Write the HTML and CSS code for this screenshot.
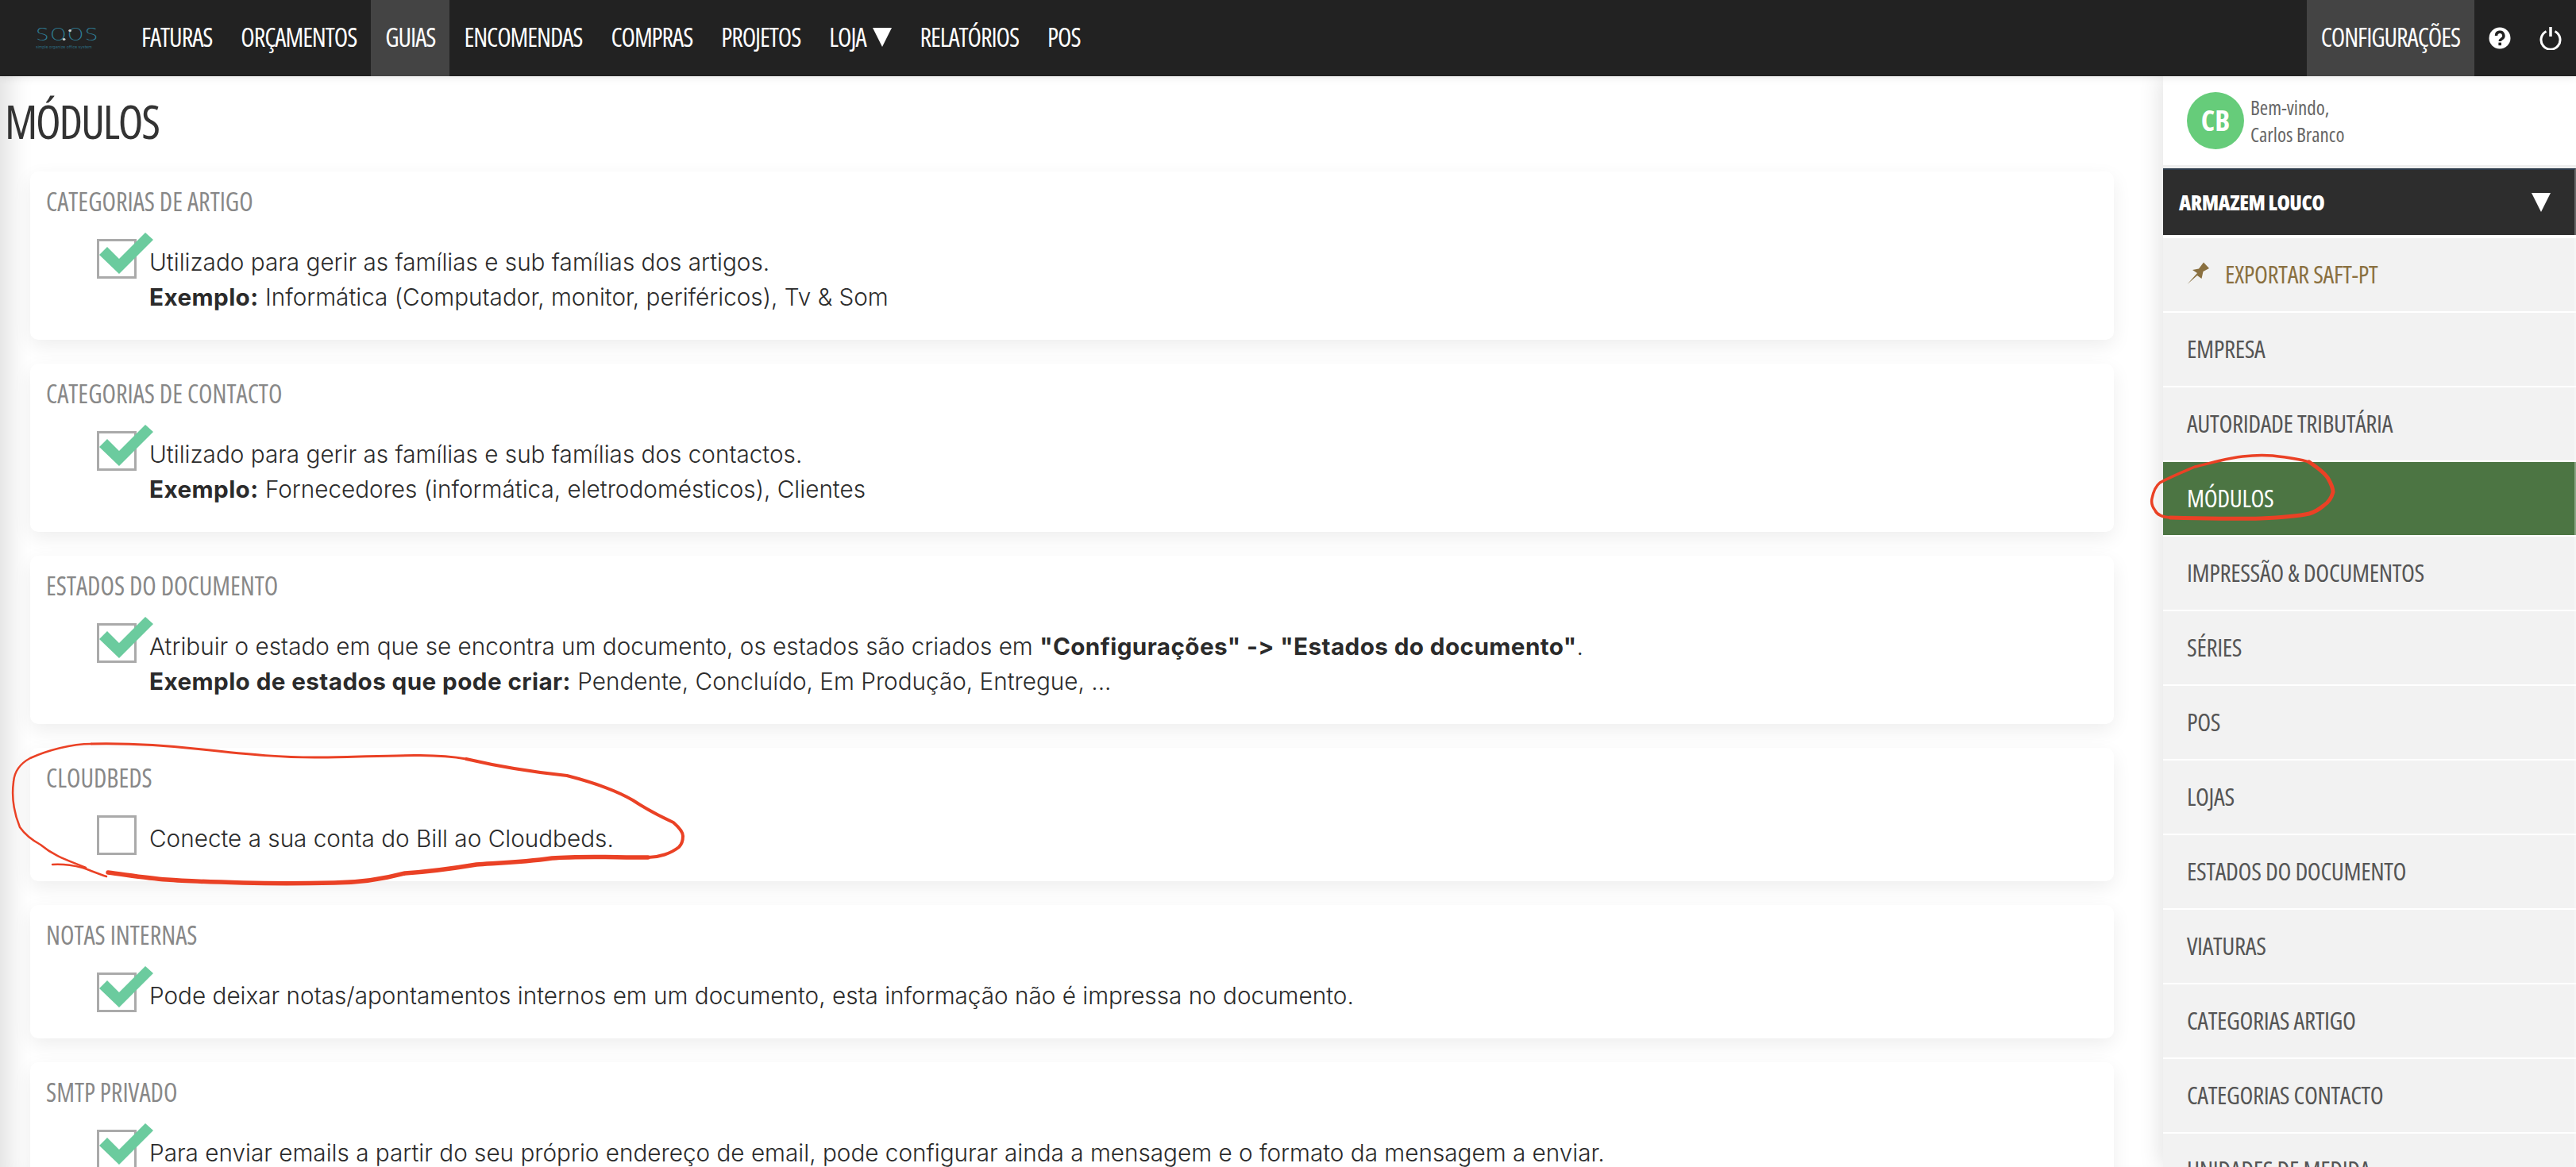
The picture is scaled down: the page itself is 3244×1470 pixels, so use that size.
FILE: index.html
```html
<!DOCTYPE html>
<html lang="pt">
  <head>
    <meta charset="UTF-8" />
    <title>Módulos</title>
    <link rel="stylesheet" href="styles.css">
  </head>
  <body>
    <nav class="topbar">
      <div class="logo">
        <span class="logo-name">SOOS</span>
        <span class="logo-sub">simple organize office system</span>
      </div>
      <a class="nav-item">FATURAS</a>
      <a class="nav-item">ORÇAMENTOS</a>
      <a class="nav-item active">GUIAS</a>
      <a class="nav-item">ENCOMENDAS</a>
      <a class="nav-item">COMPRAS</a>
      <a class="nav-item">PROJETOS</a>
      <a class="nav-item">LOJA <i class="arrow"></i></a>
      <a class="nav-item">RELATÓRIOS</a>
      <a class="nav-item">POS</a>
      <a class="nav-item active push">CONFIGURAÇÕES</a>
      <a class="nav-icon">
        <svg width="28" height="28" viewBox="0 0 28 28">
          <circle cx="14" cy="14" r="13.5" fill="#fff" />
          <path d="M9.500 11 a4.700 4.700 0 1 1 7 4 c-1.600 1 -2.200 1.600 -2.200 3" fill="none" stroke="#222" stroke-width="3.400" />
          <rect x="12.400" y="19.600" width="3.600" height="3.600" fill="#222" />
        </svg>
      </a>
      <a class="nav-icon">
        <svg width="28" height="30" viewBox="0 0 28 30">
          <path d="M8.500 6.500 a12 12 0 1 0 11 0" fill="none" stroke="#fff" stroke-width="3" />
          <path d="M14 1 v12" stroke="#fff" stroke-width="3.500" />
        </svg>
      </a>
    </nav>

    <div class="page">
      <main class="content">
        <h1>MÓDULOS</h1>

        <section class="card">
          <h2>CATEGORIAS DE ARTIGO</h2>
          <div class="module">
            <span class="check on"><svg width="74" height="62" viewBox="0 0 74 62"><use href="#tick" /></svg></span>
            <p>
              Utilizado para gerir as famílias e sub famílias dos artigos.<br />
              <b>Exemplo:</b> Informática (Computador, monitor, periféricos), Tv &amp; Som
            </p>
          </div>
        </section>

        <section class="card">
          <h2>CATEGORIAS DE CONTACTO</h2>
          <div class="module">
            <span class="check on"><svg width="74" height="62" viewBox="0 0 74 62"><use href="#tick" /></svg></span>
            <p>
              Utilizado para gerir as famílias e sub famílias dos contactos.<br />
              <b>Exemplo:</b> Fornecedores (informática, eletrodomésticos), Clientes
            </p>
          </div>
        </section>

        <section class="card">
          <h2>ESTADOS DO DOCUMENTO</h2>
          <div class="module">
            <span class="check on"><svg width="74" height="62" viewBox="0 0 74 62"><use href="#tick" /></svg></span>
            <p>
              Atribuir o estado em que se encontra um documento, os estados são criados em <b>"Configurações" -&gt; "Estados do documento"</b>.<br />
              <b>Exemplo de estados que pode criar:</b> Pendente, Concluído, Em Produção, Entregue, ...
            </p>
          </div>
        </section>

        <section class="card">
          <h2>CLOUDBEDS</h2>
          <div class="module">
            <span class="check"></span>
            <p>Conecte a sua conta do Bill ao Cloudbeds.</p>
          </div>
        </section>

        <section class="card">
          <h2>NOTAS INTERNAS</h2>
          <div class="module">
            <span class="check on"><svg width="74" height="62" viewBox="0 0 74 62"><use href="#tick" /></svg></span>
            <p>Pode deixar notas/apontamentos internos em um documento, esta informação não é impressa no documento.</p>
          </div>
        </section>

        <section class="card">
          <h2>SMTP PRIVADO</h2>
          <div class="module">
            <span class="check on"><svg width="74" height="62" viewBox="0 0 74 62"><use href="#tick" /></svg></span>
            <p>Para enviar emails a partir do seu próprio endereço de email, pode configurar ainda a mensagem e o formato da mensagem a enviar.</p>
          </div>
        </section>
      </main>

      <aside class="sidebar">
        <div class="profile">
          <div class="avatar">CB</div>
          <div class="welcome">Bem-vindo,<br />Carlos Branco</div>
        </div>
        <div class="store">
          <span>ARMAZEM LOUCO</span>
          <i class="store-arrow"></i>
        </div>
        <a class="side-item saft">
          <svg width="30" height="30" viewBox="9 12 30 30">
            <polygon points="9.500,40 22,26 16,22 24,20.500 30,12.500 37,20 29.500,24 27.500,33 22,29" fill="#8a7040" />
          </svg>
          EXPORTAR SAFT-PT
        </a>
        <a class="side-item">EMPRESA</a>
        <a class="side-item">AUTORIDADE TRIBUTÁRIA</a>
        <a class="side-item current">MÓDULOS</a>
        <a class="side-item">IMPRESSÃO &amp; DOCUMENTOS</a>
        <a class="side-item">SÉRIES</a>
        <a class="side-item">POS</a>
        <a class="side-item">LOJAS</a>
        <a class="side-item">ESTADOS DO DOCUMENTO</a>
        <a class="side-item">VIATURAS</a>
        <a class="side-item">CATEGORIAS ARTIGO</a>
        <a class="side-item">CATEGORIAS CONTACTO</a>
        <a class="side-item">UNIDADES DE MEDIDA</a>
      </aside>
    </div>

    <svg class="defs" width="0" height="0">
      <symbol id="tick" viewBox="0 0 74 62">
        <polygon points="61,0 71,9 28,52 3,28 13,18 28,33" fill="#6bcb9e" />
      </symbol>
    </svg>

    <!-- red pen marks on top of the screenshot -->
    <svg class="marks" width="3244" height="1470" viewBox="0 0 3244 1470" fill="none" stroke="#ea4125" stroke-linecap="round" stroke-linejoin="round">
      <path stroke-width="2.500" d="M66 1089 C80 1088 92 1090 104 1093 C115 1097 125 1101 134 1104" />
      <path stroke-width="2.500" d="M115 937 C90 937 60 945 38 955 C25 962 18 972 17 985 C15 1000 16 1020 25 1042 C32 1052 40 1058 51 1064 C70 1080 90 1085 108 1093" />
      <path stroke-width="3" d="M115 937 C160 936 210 939 255 944 C310 950 360 955 408 954 C480 953 540 948 587 956" />
      <path stroke-width="4" d="M587 956 C630 966 675 973 714 977 C745 985 775 995 797 1008 C815 1020 835 1030 848 1036 C856 1043 860 1048 860 1053 C860 1060 858 1064 855 1067 C845 1075 830 1080 816 1080" />
      <path stroke-width="5.500" d="M816 1080 C770 1080 730 1078 695 1081 C660 1086 630 1087 600 1089 C570 1094 540 1098 510 1100 C480 1108 450 1112 421 1112 C380 1113 340 1113 306 1112 C270 1111 235 1110 210 1108 C185 1106 160 1102 136 1099" />
      <path stroke-width="3.500" d="M2733 652 C2722 651 2716 648 2714 643 C2710 638 2709 633 2710 628 C2712 618 2715 612 2720 608 C2735 600 2750 594 2764 588 C2785 583 2805 577 2824 575 C2840 573 2850 573 2862 574 C2880 576 2895 578 2908 582" />
      <path stroke-width="5" d="M2908 582 C2920 590 2928 596 2932 603 C2936 610 2938 615 2938 620 C2936 628 2932 633 2926 637 C2920 642 2915 645 2908 647 C2890 651 2870 652 2847 653 C2810 654 2770 653 2733 652" />
    </svg>
  </body>
</html>
```
FILE: styles.css
```css
html,
body {
  margin: 0;
  height: 100%;
  overflow: hidden;
}

body {
  position: relative;
  background: #fff;
  color: #333;
  font-family: "Inter", "Liberation Sans", sans-serif;
  font-variant-ligatures: none;
  font-feature-settings: "calt" 0;
}

h1,
h2,
.nav-item,
.side-item,
.welcome,
.avatar,
.store {
  font-family: "Open Sans", "Liberation Sans", sans-serif;
  font-stretch: 75%;
}

.topbar {
  display: flex;
  align-items: stretch;
  height: 96px;
  background: #222;
  position: relative;
  z-index: 3;
  box-shadow: 0 2px 10px rgba(0, 0, 0, 0.08);
}

.logo {
  width: 160px;
  display: flex;
  flex-direction: column;
  padding: 32px 0 0 45px;
  box-sizing: border-box;
  color: #2f7d96;
}

.logo-name {
  position: relative;
  width: 62px;
  font-family: "DejaVu Sans", sans-serif;
  font-weight: 200;
  font-size: 21px;
  line-height: 24px;
  letter-spacing: 1px;
  transform: scaleX(1.25);
  transform-origin: left;
}

.logo-name::before,
.logo-name::after {
  content: "";
  position: absolute;
  width: 3px;
  height: 3px;
  border-radius: 50%;
  background: #ccc;
}

.logo-name::before {
  left: 33px;
  top: 5px;
}

.logo-name::after {
  left: 27px;
  top: 16px;
}

.logo-sub {
  font-size: 5px;
  line-height: 7px;
  white-space: nowrap;
  opacity: 0.8;
}

.nav-item {
  display: flex;
  align-items: center;
  padding: 0 18px 3px;
  color: #fff;
  font-size: 32px;
  letter-spacing: -1.05px;
}

.nav-item.active {
  background: #444;
}

.nav-item.push {
  margin-left: auto;
}

.arrow {
  width: 0;
  height: 0;
  margin-left: 8px;
  border-left: 12px solid transparent;
  border-right: 12px solid transparent;
  border-top: 24px solid #fff;
}

.nav-icon {
  width: 64px;
  display: flex;
  align-items: center;
  justify-content: center;
}

.page {
  display: flex;
  height: 1374px;
}

.content {
  flex: 1;
  padding: 0 62px 0 38px;
  overflow: hidden;
  box-shadow: inset 36px 0 30px -24px rgba(0, 0, 0, 0.12);
}

h1 {
  margin: 0 0 0 -32px;
  height: 120px;
  line-height: 114px;
  font-size: 58px;
  font-weight: 400;
  letter-spacing: -2.2px;
}

.card {
  background: #fff;
  border-radius: 10px;
  margin-bottom: 30px;
  padding: 0 20px 32px;
  box-shadow: 0 8px 24px rgba(0, 0, 0, 0.07);
}

h2 {
  margin: 0;
  height: 85px;
  line-height: 75px;
  font-size: 32px;
  font-weight: 400;
  color: #888;
}

.module {
  display: flex;
  gap: 16px;
  margin-left: 64px;
}

.module p {
  margin: 7px 0 0;
  font-size: 29.700px;
  font-weight: 300;
  line-height: 44px;
  color: #2b2b2b;
}

.module b {
  font-weight: 700;
  letter-spacing: 0.4px;
}

.check {
  flex: none;
  position: relative;
  width: 50px;
  height: 50px;
  box-sizing: border-box;
  border: 3px solid #aaa;
}

.check svg {
  position: absolute;
  left: -3px;
  top: -11px;
}

.sidebar {
  width: 520px;
  flex: none;
  box-shadow: -6px 0 24px rgba(0, 0, 0, 0.1);
  position: relative;
}

.profile {
  height: 112px;
  display: flex;
  align-items: center;
  gap: 8px;
  padding-left: 30px;
  border-bottom: 4px solid #eee;
}

.avatar {
  width: 72px;
  height: 72px;
  border-radius: 50%;
  background: #66cc7a;
  color: #fff;
  font-size: 36px;
  font-weight: 700;
  line-height: 72px;
  text-align: center;
}

.welcome {
  font-size: 25px;
  line-height: 34px;
  color: #666;
}

.store {
  height: 84px;
  margin-bottom: 4px;
  box-sizing: border-box;
  display: flex;
  align-items: center;
  justify-content: space-between;
  padding: 0 30px 0 20px;
  background: #2d2d2d;
  border-top: 2px solid #2b3a4a;
  border-right: 2px solid #666;
  color: #fff;
  font-size: 26.500px;
  font-weight: 800;
  letter-spacing: -0.5px;
}

.store-arrow {
  width: 0;
  height: 0;
  border-left: 12px solid transparent;
  border-right: 12px solid transparent;
  border-top: 24px solid #fff;
}

.side-item {
  display: flex;
  align-items: center;
  height: 92px;
  box-sizing: border-box;
  margin-bottom: 2px;
  padding: 0 0 3px 30px;
  gap: 18px;
  background: #f2f2f2;
  border-right: 2px solid rgba(255, 255, 255, 0.35);
  color: #555;
  font-size: 31px;
  letter-spacing: -0.35px;
}

.side-item.saft {
  color: #8a7040;
}

.side-item.current {
  background: #4c7543;
  color: #fff;
}

.defs {
  position: absolute;
}

.marks {
  position: absolute;
  left: 0;
  top: 0;
  z-index: 5;
  pointer-events: none;
}
```
